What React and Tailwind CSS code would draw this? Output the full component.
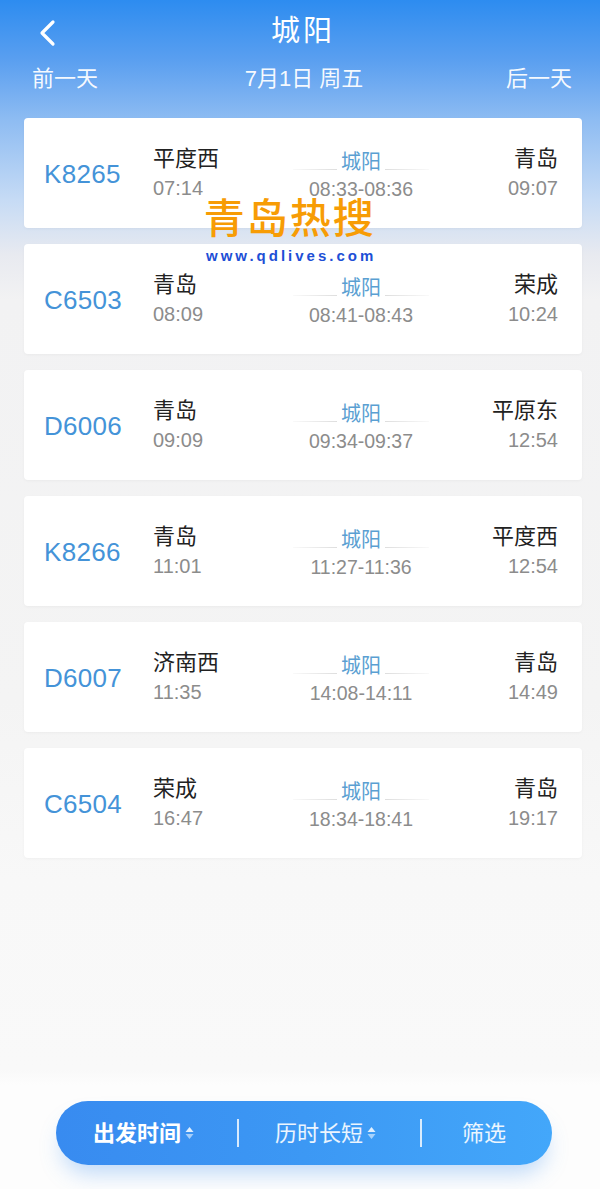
import React from "react";

const trains = [
  { no: "K8265", from: "平度西", dep: "07:14", stop: "08:33-08:36", to: "青岛", arr: "09:07" },
  { no: "C6503", from: "青岛", dep: "08:09", stop: "08:41-08:43", to: "荣成", arr: "10:24" },
  { no: "D6006", from: "青岛", dep: "09:09", stop: "09:34-09:37", to: "平原东", arr: "12:54" },
  { no: "K8266", from: "青岛", dep: "11:01", stop: "11:27-11:36", to: "平度西", arr: "12:54" },
  { no: "D6007", from: "济南西", dep: "11:35", stop: "14:08-14:11", to: "青岛", arr: "14:49" },
  { no: "C6504", from: "荣成", dep: "16:47", stop: "18:34-18:41", to: "青岛", arr: "19:17" },
];

function SortIcon() {
  return (
    <svg width="11" height="16" viewBox="0 0 11 16" className="ml-[3px]">
      <path d="M5.5 2 L9.5 7 L1.5 7 Z" fill="rgba(255,255,255,0.85)" />
      <path d="M5.5 14 L9.5 9 L1.5 9 Z" fill="rgba(255,255,255,0.55)" />
    </svg>
  );
}

function Card({ t }) {
  return (
    <div className="h-[110px] bg-white rounded-[4px] flex items-center pl-[20px] pr-[24px] shadow-[0_1px_3px_rgba(0,0,0,0.04)]">
      <div className="w-[109px] text-[26px] leading-none text-[#4493d8] pt-[2px] tracking-[0.3px]">{t.no}</div>
      <div className="w-[140px] flex flex-col">
        <div className="text-[22px] leading-[28px] text-[#222]">{t.from}</div>
        <div className="text-[20px] leading-[28px] text-[#8c8c8c] mt-[1px]">{t.dep}</div>
      </div>
      <div className="w-[136px] flex flex-col items-center pt-[4px]">
        <div className="flex items-center w-full">
          <div className="flex-1 h-px mt-[16px] bg-[linear-gradient(90deg,rgba(225,225,225,0.2),#dedede)]"></div>
          <div className="text-[20px] leading-[26px] text-[#5a9fd2] px-[4px]">城阳</div>
          <div className="flex-1 h-px mt-[16px] bg-[linear-gradient(90deg,#dedede,rgba(225,225,225,0.2))]"></div>
        </div>
        <div className="text-[19.5px] leading-[26px] text-[#8c8c8c] mt-[1px] whitespace-nowrap">{t.stop}</div>
      </div>
      <div className="flex-1 flex flex-col items-end">
        <div className="text-[22px] leading-[28px] text-[#222]">{t.to}</div>
        <div className="text-[20px] leading-[28px] text-[#8c8c8c] mt-[1px]">{t.arr}</div>
      </div>
    </div>
  );
}

export default function App() {
  return (
    <div
      className="relative w-[600px] h-[1189px] flex flex-col overflow-hidden bg-[linear-gradient(180deg,#2d8cf0_0px,#5a9ff0_60px,#8ebcf2_120px,#c6dbf5_200px,#e8eaf0_255px,#f2f2f3_300px,#f4f4f4_700px,#f8f8f8_880px,#f9f9f9_1070px,#fdfdfd_1085px,#fdfdfd_1189px)]"
      style={{ fontFamily: '"Liberation Sans", "Noto Sans CJK SC", sans-serif' }}
    >
      {/* header */}
      <div className="h-[118px] flex flex-col">
        <div className="h-[62px] flex items-center justify-center relative">
          <svg className="absolute left-[37px] top-[19px]" width="20" height="28" viewBox="0 0 20 28">
            <path d="M16 3 L5 14 L16 25" stroke="white" strokeWidth="3.2" fill="none" strokeLinecap="round" strokeLinejoin="round" />
          </svg>
          <div className="text-[29px] leading-none text-white font-normal tracking-[3px] ml-[6px]">城阳</div>
        </div>
        <div className="flex items-center justify-between pl-[32px] pr-[28px] h-[32px] text-[22px] text-white/95">
          <span>前一天</span>
          <span className="ml-[4px]">7月1日 周五</span>
          <span>后一天</span>
        </div>
      </div>

      {/* list */}
      <div className="flex flex-col gap-[16px] px-[24px] pr-[18px]">
        {trains.map((t) => (
          <Card key={t.no} t={t} />
        ))}
      </div>

      <div className="flex-1"></div>

      {/* bottom bar */}
      <div className="px-[56px] pr-[48px] pb-[24px]">
        <div className="h-[64px] rounded-full flex items-center bg-[linear-gradient(90deg,#388bf0,#3c98f4_50%,#43a7fa)] shadow-[0_14px_22px_-6px_rgba(70,150,240,0.35)] text-[22px] text-white">
          <div className="w-[181px] flex items-center pl-[37px] font-bold">
            出发时间<SortIcon />
          </div>
          <div className="w-[2px] h-[28px] bg-white/80"></div>
          <div className="w-[181px] flex items-center pl-[36px] text-white/90">
            历时长短<SortIcon />
          </div>
          <div className="w-[2px] h-[28px] bg-white/80"></div>
          <div className="flex-1 flex items-center pl-[40px] text-white/90">筛选</div>
        </div>
      </div>

      {/* watermark */}
      <div className="absolute left-[203px] top-[196px] flex flex-col items-center pointer-events-none">
        <div className="text-[41px] leading-[46px] font-medium text-[#f79c05] tracking-[2px]">青岛热搜</div>
        <div className="text-[15px] leading-[18px] font-bold text-[#1d4fd6] tracking-[3px] mt-[5px] ml-[3px]">www.qdlives.com</div>
      </div>
    </div>
  );
}
